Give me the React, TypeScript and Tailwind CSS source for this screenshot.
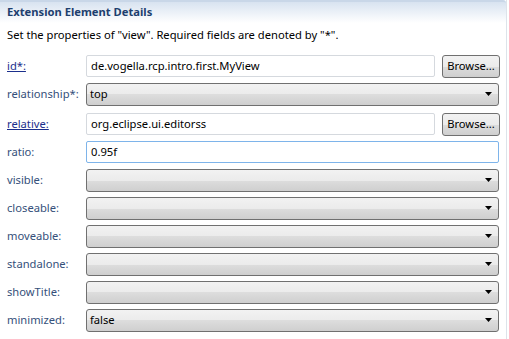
import React from 'react';

type Row = {
  label: string;
  kind: 'text' | 'combo';
  value?: string;
  link?: boolean;
  browse?: boolean;
  focused?: boolean;
  extra?: string;
};

const ROWS: Row[] = [
  { label: 'id*:', kind: 'text', value: 'de.vogella.rcp.intro.first.MyView', link: true, browse: true },
  { label: 'relationship*:', kind: 'combo', value: 'top' },
  { label: 'relative:', kind: 'text', value: 'org.eclipse.ui.editorss', link: true, browse: true, extra: 'mt-[2px]' },
  { label: 'ratio:', kind: 'text', value: '0.95f', focused: true },
  { label: 'visible:', kind: 'combo' },
  { label: 'closeable:', kind: 'combo' },
  { label: 'moveable:', kind: 'combo' },
  { label: 'standalone:', kind: 'combo' },
  { label: 'showTitle:', kind: 'combo' },
  { label: 'minimized:', kind: 'combo', value: 'false' },
];

const Arrow = () => (
  <svg width="7" height="4" viewBox="0 0 7 4" className="shrink-0">
    <path d="M0 0 H7 L3.5 4 Z" fill="#000" />
  </svg>
);

const Combo = ({ value }: { value?: string }) => (
  <div className="flex h-[23px] w-[413px] items-center justify-between rounded-[3px] border border-[#707070] bg-[linear-gradient(to_bottom,#f2f2f2_0%,#ebebeb_50%,#dddddd_50%,#cfcfcf_100%)] pl-[3px] pr-[6px] text-black">
    <span>{value}</span>
    <Arrow />
  </div>
);

const Field = ({ value, focused }: { value?: string; focused?: boolean }) => (
  <div
    className={`flex h-[22px] items-center rounded-[2px] border bg-white pl-[4px] text-black ${
      focused ? 'w-[413px] border-[#7eb4ea]' : 'w-[349px] border-[#d5d9de]'
    }`}
  >
    {value}
  </div>
);

const BrowseButton = () => (
  <button className="ml-[7px] flex h-[23px] w-[58px] items-center justify-center rounded-[3px] border border-[#707070] bg-[linear-gradient(to_bottom,#f2f2f2_0%,#ebebeb_50%,#dddddd_50%,#cfcfcf_100%)] text-black">
    Browse...
  </button>
);

export default function App() {
  return (
    <div className="h-[339px] w-[509px] bg-white text-[11.2px] font-['Noto_Sans',sans-serif]">
      <div className="h-full w-[507px] border-r border-[#dde3ea]">
        {/* Header */}
        <div className="flex h-[23px] items-center rounded-tr-[3px] border-t-2 border-[#c9d7e8] bg-gradient-to-b from-[#d8e3f0] to-white pl-[7px]">
          <span className="font-bold text-[#1d3f6e]">Extension Element Details</span>
        </div>

        <p className="h-[23px] pl-[7px] leading-[23px] text-black">
          Set the properties of "view". Required fields are denoted by "*".
        </p>

        <div className="flex flex-col pt-[6px]">
          {ROWS.map((row) => (
            <div key={row.label} className={`flex h-[28px] items-center ${row.extra ?? ''}`}>
              <div className="w-[86px] shrink-0 pl-[7px]">
                {row.link ? (
                  <span className="text-[#1b2f8c] underline">{row.label}</span>
                ) : (
                  <span className="text-[#35507a]">{row.label}</span>
                )}
              </div>
              {row.kind === 'combo' ? (
                <Combo value={row.value} />
              ) : (
                <>
                  <Field value={row.value} focused={row.focused} />
                  {row.browse && <BrowseButton />}
                </>
              )}
            </div>
          ))}
        </div>
      </div>
    </div>
  );
}
